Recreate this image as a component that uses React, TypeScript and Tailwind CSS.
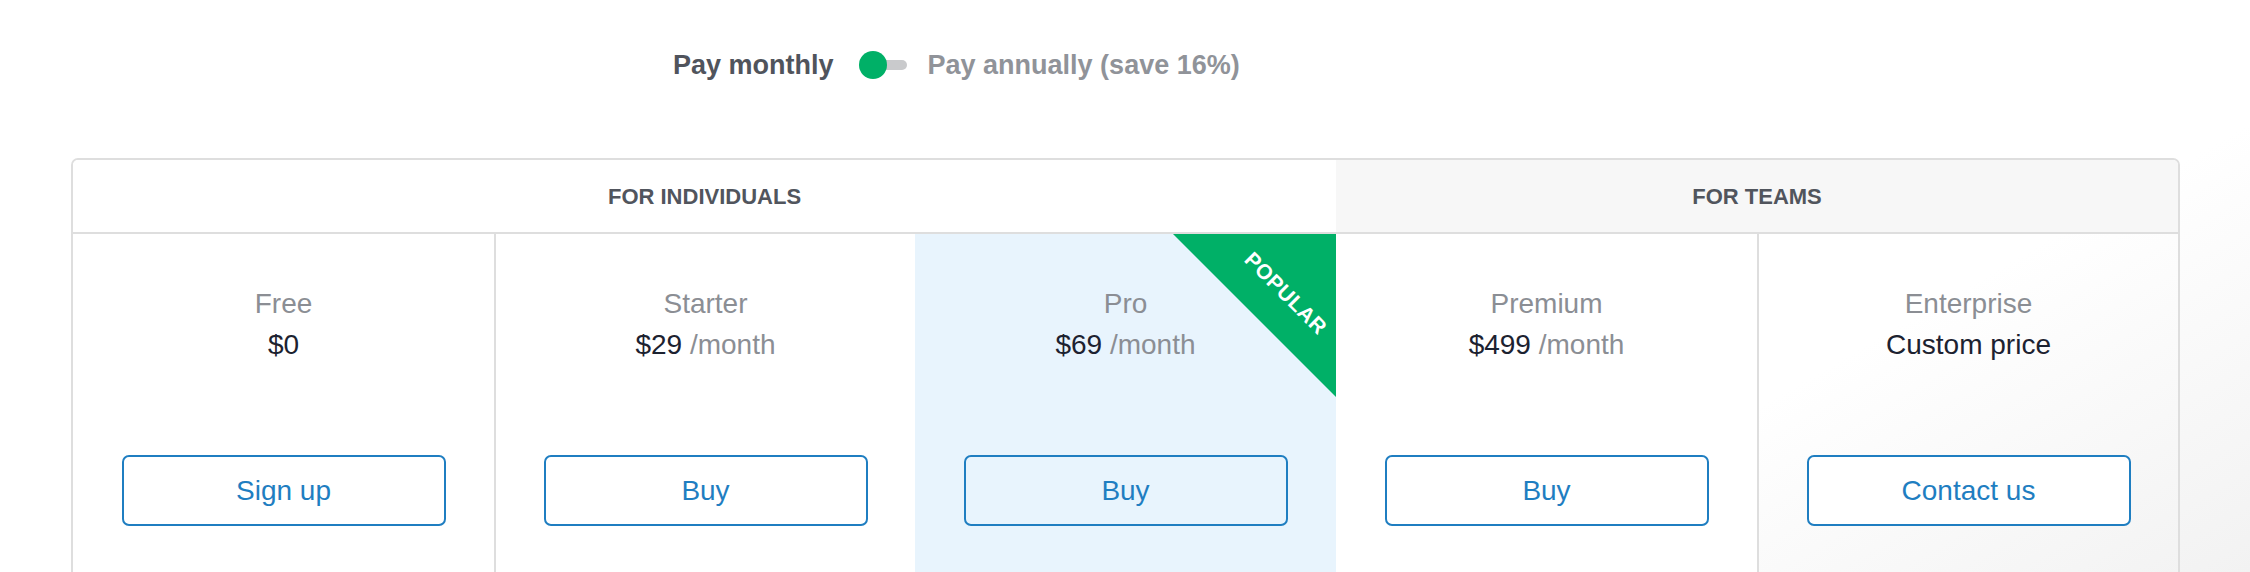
const plans = [
  { name: 'Free', price: '$0', per: false, cta: 'Sign up' },
  { name: 'Starter', price: '$29', per: true, cta: 'Buy' },
  { name: 'Pro', price: '$69', per: true, cta: 'Buy', popular: true },
  { name: 'Premium', price: '$499', per: true, cta: 'Buy' },
  { name: 'Enterprise', price: 'Custom price', per: false, cta: 'Contact us' },
]

function PlanColumn({ plan, index }: { plan: (typeof plans)[number]; index: number }) {
  const bg = plan.popular ? 'bg-[#e8f4fd]' : index === 4 ? 'bg-transparent' : 'bg-white'
  const divider = index === 1 || index === 4 ? 'border-l-2 border-[#dedede]' : ''

  return (
    <div className={`relative flex flex-col items-center pt-[49px] min-h-[420px] ${bg} ${divider}`}>
      {plan.popular && (
        <div className="absolute right-0 top-0 w-[163px] h-[163px] bg-[#00b067] [clip-path:polygon(0_0,100%_0,100%_100%)]">
          <span className="absolute left-[113px] top-[59px] -translate-x-1/2 -translate-y-1/2 rotate-45 text-white text-[21px] font-bold leading-none tracking-[0.5px]">
            POPULAR
          </span>
        </div>
      )}
      <div className="text-[28px] leading-[41px] text-[#8b8e94]">{plan.name}</div>
      <div className="text-[28px] leading-[41px] text-[#1c2230]">
        {plan.price}
        {plan.per && <span className="text-[#8b8e94]"> /month</span>}
      </div>
      <button
        className={`mt-[90px] w-[324px] h-[71px] rounded-[7px] border-2 border-[#1f7ec1] text-[28px] text-[#1f7ec1] ${
          plan.popular ? 'bg-transparent' : 'bg-white'
        }`}
      >
        {plan.cta}
      </button>
    </div>
  )
}

export default function App() {
  return (
    <div
      className="w-[2250px] h-[572px] overflow-hidden bg-[linear-gradient(150deg,#ffffff_76%,#f2f2f2_100%)]"
      style={{ fontFamily: '"Liberation Sans", Arial, sans-serif' }}
    >
      {/* billing toggle */}
      <div className="flex items-center h-10 mt-[45px] pl-[673px]">
        <span className="text-[27px] font-bold text-[#50545c]">Pay monthly</span>
        <div className="relative flex items-center w-[48px] h-[28px] ml-[25px]">
          <div className="ml-[4px] w-[44px] h-[10px] rounded-full bg-[#c9cacc]" />
          <div className="absolute left-0 top-0 w-[28px] h-[28px] rounded-full bg-[#00b067]" />
        </div>
        <span className="ml-[21px] text-[27px] font-bold text-[#909399]">Pay annually (save 16%)</span>
      </div>

      {/* plans card */}
      <div className="mt-[73px] ml-[71px] w-[2109px] border-2 border-[#dedede] rounded-[7px] overflow-hidden">
        <div className="grid grid-cols-5 border-b-2 border-[#dedede]">
          <div className="col-span-3 flex items-center justify-center h-[72px] bg-white text-[22px] font-bold text-[#51555d]">
            FOR INDIVIDUALS
          </div>
          <div className="col-span-2 flex items-center justify-center h-[72px] bg-[#f7f7f7] text-[22px] font-bold text-[#51555d]">
            FOR TEAMS
          </div>
        </div>
        <div className="grid grid-cols-5">
          {plans.map((p, i) => (
            <PlanColumn key={p.name} plan={p} index={i} />
          ))}
        </div>
      </div>
    </div>
  )
}
